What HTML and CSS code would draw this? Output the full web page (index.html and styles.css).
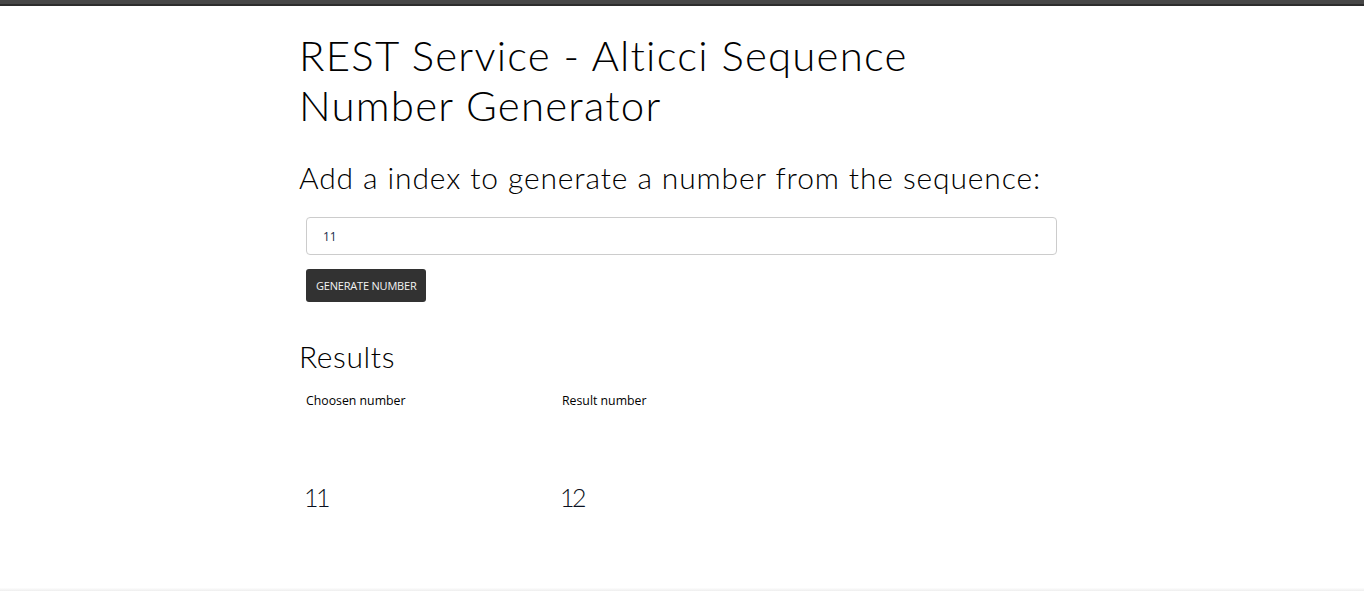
FILE: index.html
```html
<!DOCTYPE html>
<html lang="en">
<head>
<meta charset="utf-8">
<title>Alticci Sequence</title>
<link rel="stylesheet" href="styles.css">
</head>
<body>
<div class="topbar"></div>
<main class="page">
  <h1 class="title">REST Service - Alticci Sequence<br>Number Generator</h1>
  <h2 class="subtitle">Add a index to generate a number from the sequence:</h2>
  <form class="form">
    <input class="field" type="text" value="11">
    <button class="btn" type="button">GENERATE NUMBER</button>
  </form>
  <h3 class="results-title">Results</h3>
  <div class="results">
    <div class="col">
      <div class="label">Choosen number</div>
      <div class="value">11</div>
    </div>
    <div class="col">
      <div class="label">Result number</div>
      <div class="value">12</div>
    </div>
  </div>
</main>
<div class="bottombar"></div>
</body>
</html>
```
FILE: styles.css
```css
html, body {
  margin: 0;
  padding: 0;
  background: #fff;
  height: 100%;
}
body {
  display: flex;
  flex-direction: column;
  font-family: "Open Sans", "Liberation Sans", sans-serif;
  color: #000;
}
.topbar {
  height: 4px;
  background: #474747;
  border-bottom: 2px solid #2c2c2c;
  flex: none;
}
.page {
  flex: 1;
  width: 766px;
  margin-left: 299px;
  box-sizing: border-box;
}
.title {
  font-family: Lato, "Open Sans", sans-serif;
  font-weight: 300;
  font-size: 42px;
  line-height: 50px;
  margin: 24px 0 0 0;
  letter-spacing: 1.2px;
  color: #000;
}
.subtitle {
  font-family: Lato, "Open Sans", sans-serif;
  font-weight: 300;
  font-size: 30px;
  line-height: 36px;
  margin: 29px 0 0 0;
  letter-spacing: 0.88px;
}
.form {
  display: flex;
  flex-direction: column;
  align-items: flex-start;
  gap: 14px;
  padding: 0 8px 0 7px;
  margin-top: 22px;
}
.field {
  width: 100%;
  box-sizing: border-box;
  height: 38px;
  border: 1px solid #cccccc;
  border-radius: 4px;
  padding: 0 16px;
  font-family: "Open Sans", sans-serif;
  font-size: 12px;
  color: #1a2a4a;
  outline: none;
}
.btn {
  background: #323232;
  color: #f2f2f2;
  border: none;
  border-radius: 3px;
  height: 33px;
  padding: 0 10px;
  font-family: "Open Sans", sans-serif;
  font-size: 11px;
  letter-spacing: -0.2px;
}
.results-title {
  font-family: Lato, "Open Sans", sans-serif;
  font-weight: 300;
  font-size: 30px;
  line-height: 36px;
  margin: 36px 0 0 0;
  letter-spacing: 0.6px;
}
.results {
  display: flex;
  padding-left: 7px;
  margin-top: 18px;
}
.col {
  width: 256px;
}
.label {
  font-size: 12.3px;
  line-height: 18px;
}
.value {
  font-family: Lato, "Open Sans", sans-serif;
  font-weight: 300;
  font-size: 25px;
  line-height: 30px;
  margin-top: 72px;
  margin-left: -2px;
  letter-spacing: -2.5px;
  color: #0a1020;
}
.bottombar {
  flex: none;
  height: 3px;
  background: linear-gradient(#fdfdfd, #eeeeee);
}
```
